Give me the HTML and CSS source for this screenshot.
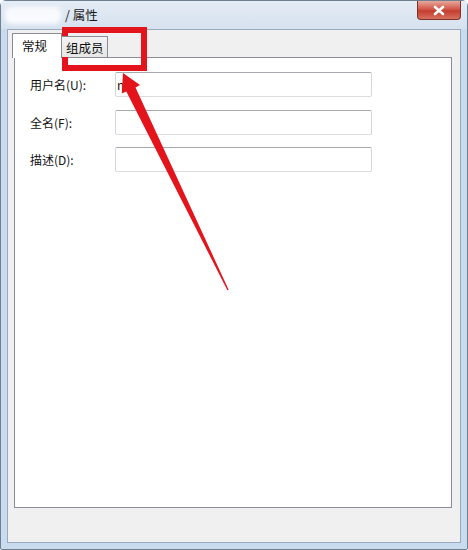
FILE: index.html
```html
<!DOCTYPE html>
<html lang="zh-CN">
<head>
<meta charset="utf-8">
<title>属性</title>
<link rel="stylesheet" href="styles.css">
</head>
<body>
<div class="window">
  <div class="titlebar">
    <span class="blur"></span>
    <span class="title">/ 属性</span>
    <div class="close">
      <svg width="14" height="11" viewBox="0 0 14 11"><path d="M3 2 L11 9 M11 2 L3 9" stroke="#fff" stroke-width="2.6" stroke-linecap="round"/></svg>
    </div>
  </div>
  <div class="client">
    <div class="tabs">
      <div class="tab active">常规</div>
      <div class="tab">组成员</div>
    </div>
    <div class="panel">
      <div class="row"><span class="label">用户名(U):</span><div class="input">n</div></div>
      <div class="row"><span class="label">全名(F):</span><div class="input"></div></div>
      <div class="row"><span class="label">描述(D):</span><div class="input"></div></div>
    </div>
  </div>
  <svg class="annot" width="468" height="550" viewBox="0 0 468 550">
    <rect x="65" y="30" width="79" height="38" fill="none" stroke="#e3141c" stroke-width="6"/>
    <polygon points="123,73 140,85 135.5,87.5 228.6,289.7 227.4,290.3 126.3,91.5 121.8,93.6" fill="#e3141c"/>
  </svg>
</div>
</body>
</html>
```

FILE: styles.css
```css
html, body {
  margin: 0;
  padding: 0;
  background: #ffffff;
}
body {
  font-family: "Noto Sans CJK SC", "Noto Sans", sans-serif;
  font-size: 12px;
  color: #111;
}
.window {
  position: relative;
  width: 468px;
  height: 550px;
  box-sizing: border-box;
  background: #c9dbee;
  border: 1px solid #6f7f90;
  border-radius: 6px 6px 2px 2px;
  display: flex;
  flex-direction: column;
  padding: 0 6px 6px 6px;
}
.titlebar {
  height: 28px;
  margin: 0 -6px;
  padding: 0 6px;
  background: linear-gradient(#e4ecf5, #d6e2ef);
  display: flex;
  align-items: center;
  position: relative;
}
.blur {
  width: 56px;
  height: 17px;
  background: #f8fafd;
  border-radius: 6px;
  filter: blur(2px);
  margin-left: -2px;
}
.title {
  margin-left: 4px;
  font-size: 12.5px;
  color: #1a1a1a;
  margin-top: -2px;
}
.close {
  position: absolute;
  right: 6px;
  top: 0;
  width: 44px;
  height: 19px;
  box-sizing: border-box;
  border: 1px solid #7a3329;
  border-top: none;
  border-radius: 0 0 4px 4px;
  background: linear-gradient(#e7a89c 0%, #d2584a 45%, #c43d2f 55%, #d8705f 100%);
  display: flex;
  align-items: center;
  justify-content: center;
}
.client {
  flex: 1;
  box-sizing: border-box;
  background: #f0f0f0;
  border: 1px solid #99aabf;
  padding: 3px 8px 0 6px;
  display: flex;
  flex-direction: column;
}
.tabs {
  display: flex;
  align-items: flex-end;
  height: 24px;
  margin-left: -2px;
  position: relative;
  z-index: 1;
  font-size: 12.5px;
}
.tab {
  box-sizing: border-box;
  height: 21px;
  padding: 0 5px;
  border: 1px solid #898c95;
  border-bottom: none;
  border-left: none;
  background: linear-gradient(#f3f3f3, #e6e6e6);
  display: flex;
  align-items: center;
  line-height: 1;
}
.tab.active {
  height: 25px;
  width: 50px;
  margin-bottom: -1px;
  border-left: 1px solid #898c95;
  background: #ffffff;
  padding: 0 0 0 9px;
  margin-right: -1px;
  position: relative;
  z-index: 2;
}
.tab:not(.active) {
  width: 47px;
  padding: 2px 0 0 5px;
}
.panel {
  height: 451px;
  box-sizing: border-box;
  background: #ffffff;
  border: 1px solid #898c95;
  padding: 14px 0 0 15px;
  display: flex;
  flex-direction: column;
  gap: 12.5px;
}
.row {
  display: flex;
  align-items: center;
  height: 25px;
}
.label {
  width: 85px;
}
.input {
  width: 257px;
  height: 25px;
  box-sizing: border-box;
  border: 1px solid;
  border-color: #a7a9ae #d3d6da #dadde0 #d3d6da;
  border-radius: 2px;
  padding: 0 1px;
  line-height: 23px;
  color: #111;
}
.annot {
  position: absolute;
  left: -1px;
  top: -1px;
  pointer-events: none;
}
```
